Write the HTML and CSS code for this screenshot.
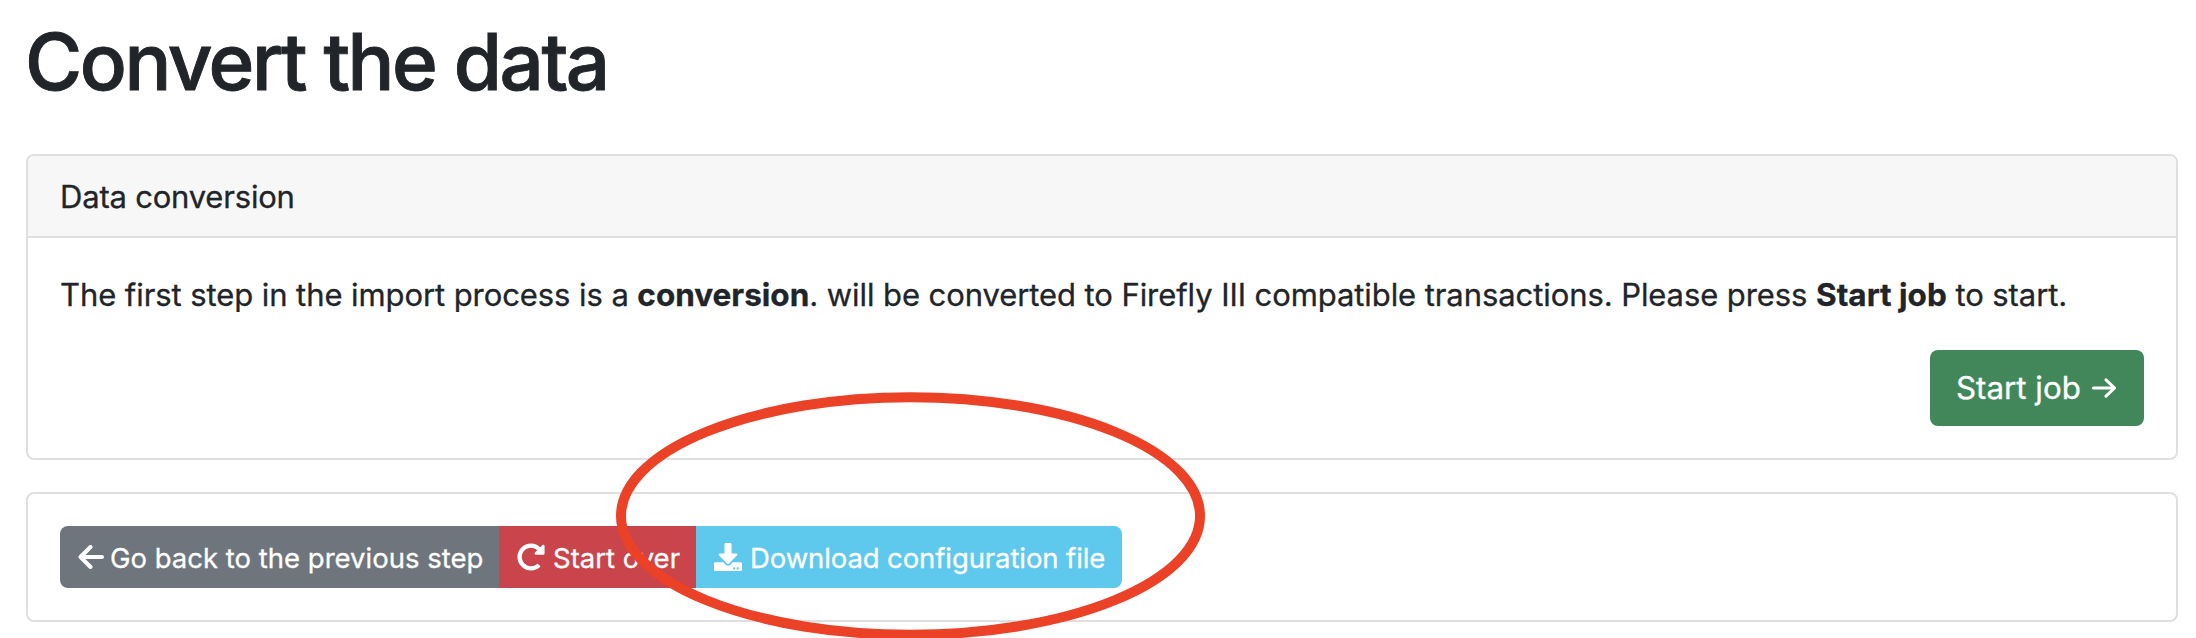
FILE: index.html
```html
<!DOCTYPE html>
<html lang="en">
<head>
<meta charset="utf-8">
<title>Convert the data</title>
<link rel="stylesheet" href="styles.css">
</head>
<body>
<main class="page">
  <h1 class="title"><span>Convert the data</span></h1>
  <section class="card">
    <div class="card-header"><span>Data conversion</span></div>
    <div class="card-body">
      <p class="text">The first step in the import process is a <strong>conversion</strong>. will be converted to Firefly III compatible transactions. Please press <strong>Start job</strong> to start.</p>
      <div class="actions">
        <button class="btn btn-success"><span>Start job</span><svg class="icon-thin" viewBox="0 0 24 20"><path d="M1.5 10H22.500M14 1.800L22.500 10L14 18.200"/></svg></button>
      </div>
    </div>
  </section>
  <section class="card footer-card">
    <div class="btn-group">
      <a class="btn btn-sm btn-secondary"><svg class="icon-back" viewBox="0 0 26 24"><path d="M24 12H2.500M12.500 2L2.500 12L12.500 22"/></svg><span>Go back to the previous step</span></a>
      <a class="btn btn-sm btn-danger"><svg class="icon" viewBox="0 0 512 512"><path d="M256.455 8c66.269.119 126.437 26.233 170.859 68.685l35.715-35.715C478.149 25.851 504 36.559 504 57.941V192c0 13.255-10.745 24-24 24H345.941c-21.382 0-32.09-25.851-16.971-40.971l41.75-41.75c-30.864-28.899-70.801-44.907-113.23-45.273-92.398-.798-170.283 73.977-169.484 169.442C88.764 348.009 162.184 424 256 424c41.127 0 79.997-14.678 110.629-41.556 4.743-4.161 11.906-3.908 16.368.553l39.662 39.662c4.872 4.872 4.631 12.815-.482 17.433C378.202 479.813 319.926 504 256 504 119.034 504 8.001 392.967 8 256.002 7.994 119.193 119.646 7.755 256.455 8z"/></svg><span>Start over</span></a>
      <a class="btn btn-sm btn-info"><svg class="icon" viewBox="0 0 512 512"><path d="M216 0h80c13.300 0 24 10.700 24 24v168h87.700c17.800 0 26.700 21.500 14.100 34.100L269.700 378.300c-7.500 7.500-19.800 7.500-27.300 0L90.100 226.100c-12.600-12.600-3.700-34.100 14.100-34.100H192V24c0-13.300 10.700-24 24-24zm296 376v112c0 13.300-10.700 24-24 24H24c-13.300 0-24-10.700-24-24V376c0-13.300 10.700-24 24-24h146.700l49 49c20.100 20.100 52.500 20.100 72.600 0l49-49H488c13.300 0 24 10.700 24 24zm-124 88c0-11-9-20-20-20s-20 9-20 20 9 20 20 20 20-9 20-20zm64 0c0-11-9-20-20-20s-20 9-20 20 9 20 20 20 20-9 20-20z"/></svg><span>Download configuration file</span></a>
    </div>
  </section>
</main>
<svg class="highlight" viewBox="0 0 590 248"><ellipse cx="295" cy="124" rx="290" ry="119"/></svg>
</body>
</html>
```
FILE: styles.css
```css
* { box-sizing: border-box; }
html { overflow: hidden; }
body {
  margin: 0;
  height: 638px;
  overflow: hidden;
  position: relative;
  background: #fff;
  color: #212529;
  font-family: Inter, "Liberation Sans", sans-serif;
  font-size: 31px;
  font-weight: 400;
  line-height: 48px;
  -webkit-text-stroke: 0.3px currentColor;
}
.page { padding: 14px 18px 0 26px; }
.title {
  margin: 0 0 44px;
  font-size: 78px;
  font-weight: 500;
  line-height: 96px;
  letter-spacing: -2.45px;
  text-indent: -1px;
  -webkit-text-stroke: 0.9px currentColor;
}
.card {
  border: 2px solid #dfdfdf;
  border-radius: 8px;
  background: #fff;
  margin-bottom: 32px;
  overflow: hidden;
}
.card-header {
  height: 82px;
  padding: 17px 32px 15px;
  letter-spacing: -0.2px;
  background: #f7f7f7;
  border-bottom: 2px solid #dfdfdf;
}
.card-body { padding: 32px; }
.text { margin: 0; padding: 1px 0 31px; white-space: nowrap; letter-spacing: -0.08px; }
.text strong { font-size: 31.5px; font-weight: 700; letter-spacing: 0; line-height: 1; }
.actions { display: flex; justify-content: flex-end; }
.btn {
  display: flex;
  align-items: center;
  border: 0;
  border-radius: 8px;
  color: #fff;
  font-family: inherit;
  font-weight: 400;
  white-space: nowrap;
  -webkit-text-stroke: 0.3px #fff;
}
.btn-success {
  width: 214px;
  height: 76px;
  padding: 0 28px 0 26px;
  font-size: 31.3px;
  justify-content: space-between;
  background: #42875a;
}
.footer-card { padding: 32px; }
.btn-group { display: flex; }
.btn-sm {
  height: 62px;
  padding: 0 0 0 18px;
  gap: 8px;
  font-size: 27.5px;
  border-radius: 0;
}
.btn-sm span { padding-top: 2px; }
.btn-secondary { width: 439px; gap: 6px; background: #6e757c; border-radius: 8px 0 0 8px; }
.btn-danger { width: 197px; background: #ca444b; }
.btn-info { width: 426px; letter-spacing: -0.1px; background: #5fc8ed; border-radius: 0 8px 8px 0; }
.icon { width: 28px; height: 28px; fill: currentColor; flex: none; }
.icon-back, .icon-thin {
  fill: none;
  stroke: currentColor;
  stroke-linecap: round;
  stroke-linejoin: round;
  flex: none;
}
.icon-back { width: 26px; height: 24px; stroke-width: 4; }
.icon-thin { width: 24px; height: 20px; stroke-width: 3; }
.highlight {
  position: absolute;
  left: 616px;
  top: 392px;
  width: 589px;
  height: 248px;
  fill: none;
  stroke: #ea4127;
  stroke-width: 10;
}
```
